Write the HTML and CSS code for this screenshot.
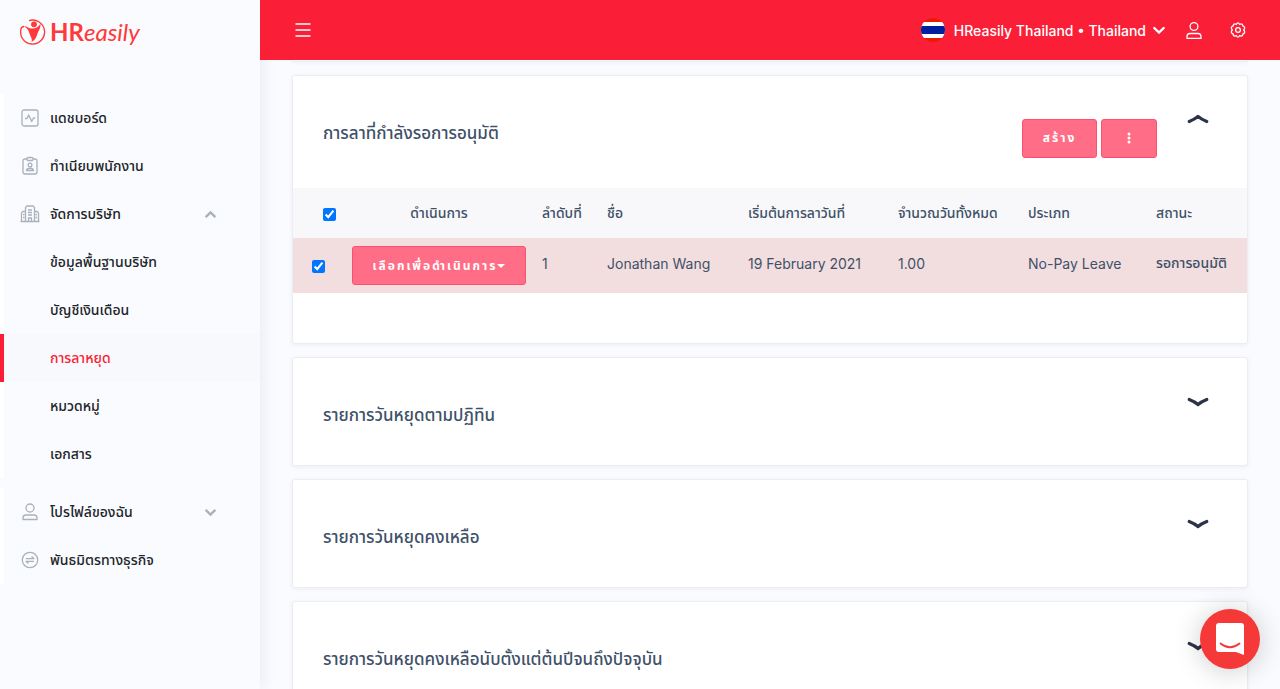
FILE: index.html
```
<!DOCTYPE html>
<html lang="th">
<head>
<meta charset="utf-8">
<meta name="viewport" content="width=device-width, initial-scale=1">
<title>HReasily</title>
<link rel="stylesheet" href="styles.css">
</head>
<body>
<div class="app">
  <aside class="sidebar">
    <a class="logo" href="#" aria-label="HReasily">
      <svg class="logo-mark" viewBox="0 0 26 26" aria-hidden="true">
        <path d="M9 1.600A12 12 0 1 1 1 10C1.200 8.500 2 7.700 4 7.500" fill="none" stroke="#ff3838" stroke-width="1.300"/>
        <circle cx="14" cy="5.300" r="2.900" fill="#ff3838"/>
        <path d="M3 7C6.500 6.500 8 9.300 12 9.600C16 9.700 18.500 8 20.500 4.600C20.700 10 18.300 12 17.300 15.200C16.500 18.500 14.800 21 11.600 23C12.400 20.500 11.300 19 10.300 16.500C9 13 8 8.500 3 7Z" fill="#ff3838"/>
      </svg>
      <span class="logo-text"><b>HR</b><i>easily</i></span>
    </a>
    <nav class="menu">
      <a class="item" href="#">
        <svg class="icon" viewBox="0 0 20 20"><rect x="2" y="2" width="16" height="16" rx="2"/><path d="M5 10.500h2L8.700 7l3 6.500L13.500 10H15"/></svg>
        <span>แดชบอร์ด</span>
      </a>
      <a class="item" href="#">
        <svg class="icon" viewBox="0 0 20 20"><path d="M7 3H5a2 2 0 0 0-2 2v11a2 2 0 0 0 2 2h10a2 2 0 0 0 2-2V5a2 2 0 0 0-2-2h-2"/><rect x="7" y="1.500" width="6" height="3" rx="1"/><circle cx="10" cy="9" r="1.900"/><path d="M6.500 14.500c.5-3 6.500-3 7 0z"/></svg>
        <span>ทำเนียบพนักงาน</span>
      </a>
      <a class="item" href="#">
        <svg class="icon" viewBox="0 0 20 20"><path d="M.5 17.500h19M5.500 17V3.500l1.500-1.500h6l1.500 1.500V17M5.500 7.500h-3L1.500 9v8M14.500 7.500h3l1 1.500v8M8 6h4M8 8.500h4M8 11h4M8.500 17v-3h3v3M3 10.500h1.500M3 13.500h1.500M15.500 10.500H17M15.500 13.500H17"/></svg>
        <span>จัดการบริษัท</span>
        <svg class="caret" viewBox="0 0 12 8"><path d="M1.500 6.500 6 2l4.500 4.500"/></svg>
      </a>
      <div class="submenu">
        <a class="item" href="#"><span>ข้อมูลพื้นฐานบริษัท</span></a>
        <a class="item" href="#"><span>บัญชีเงินเดือน</span></a>
        <a class="item active" href="#"><span>การลาหยุด</span></a>
        <a class="item" href="#"><span>หมวดหมู่</span></a>
        <a class="item" href="#"><span>เอกสาร</span></a>
      </div>
      <a class="item" href="#">
        <svg class="icon" viewBox="0 0 20 20"><circle cx="10" cy="6" r="4"/><path d="M3 17.500v-1.500c0-2 1-3 3-3h8c2 0 3 1 3 3v1.500z"/></svg>
        <span>โปรไฟล์ของฉัน</span>
        <svg class="caret" viewBox="0 0 12 8"><path d="M1.500 1.500 6 6l4.500-4.500"/></svg>
      </a>
      <a class="item" href="#">
        <svg class="icon" viewBox="0 0 20 20"><circle cx="10" cy="10" r="7.700"/><path d="M6 8.700h8L11.500 6.500M14 11.300H6l2.500 2.200"/></svg>
        <span>พันธมิตรทางธุรกิจ</span>
      </a>
    </nav>
  </aside>

  <div class="page">
    <header class="topbar">
      <button class="icon-button" type="button" aria-label="Menu">
        <svg width="16" height="16" viewBox="0 0 16 16"><path d="M.5 2h15M.5 8h15M.5 14h15" stroke="#fff" stroke-width="1.500"/></svg>
      </button>
      <div class="account">
        <button class="company" type="button">
          <svg width="24" height="24" viewBox="0 0 24 24" aria-hidden="true">
            <clipPath id="flag"><circle cx="12" cy="12" r="12"/></clipPath>
            <g clip-path="url(#flag)"><path fill="#e81c00" d="M0 0h24v24H0z"/><path fill="#fff" d="M0 4h24v16H0z"/><path fill="#00209f" d="M0 8h24v8H0z"/></g>
          </svg>
          <span>HReasily Thailand • Thailand</span>
          <svg class="company-caret" width="12" height="8" viewBox="0 0 12 8"><path d="M1.300 2 6 6.500l4.700-4.500" fill="none" stroke="#fff" stroke-width="2.400" stroke-linecap="round"/></svg>
        </button>
        <button class="icon-button" type="button" aria-label="Profile">
          <svg class="line" width="16" height="18" viewBox="0 0 16 18"><circle cx="8" cy="5.500" r="3.900"/><path d="M1 17.300v-1.500c0-2 1-3.300 3-3.300h8c2 0 3 1.300 3 3.300v1.500z"/></svg>
        </button>
        <button class="icon-button" type="button" aria-label="Settings">
          <svg class="line" width="16" height="16" viewBox="0 0 16 16"><circle cx="8" cy="8" r="2.400"/><path d="M6.400 2.300Q8-.5 9.600 2.300 12.500.9 13 4.200 16 5 13.700 8 16 11 13 11.800 12.500 15.100 9.600 13.700 8 16.500 6.400 13.700 3.500 15.100 3 11.800 0 11 2.300 8 0 5 3 4.200 3.500.9 6.400 2.300Z"/></svg>
        </button>
      </div>
    </header>

    <main class="content">
      <div class="card card-end"></div>
      <section class="card">
        <div class="card-head open">
          <h2>การลาที่กำลังรอการอนุมัติ</h2>
          <div class="actions">
            <button class="btn" type="button">สร้าง</button>
            <button class="btn more" type="button" aria-label="More"><svg width="4" height="12" viewBox="0 0 4 12"><g fill="#fff"><circle cx="2" cy="2" r="1.500"/><circle cx="2" cy="6" r="1.500"/><circle cx="2" cy="10" r="1.500"/></g></svg></button>
          </div>
          <button class="toggle" type="button" aria-label="Collapse"><svg width="22" height="10" viewBox="0 0 22 10"><path d="M2.200 7.500Q8 5.200 11 2.400 14 5.200 19.800 7.500"/></svg></button>
        </div>
        <table class="leave">
          <colgroup><col class="c-check"><col class="c-action"><col class="c-no"><col class="c-name"><col class="c-date"><col class="c-days"><col class="c-type"><col class="c-status"></colgroup>
          <thead>
            <tr>
              <th class="check"><input type="checkbox" checked aria-label="Select all"></th>
              <th class="center">ดำเนินการ</th><th>ลำดับที่</th><th>ชื่อ</th><th>เริ่มต้นการลาวันที่</th><th>จำนวณวันทั้งหมด</th><th>ประเภท</th><th>สถานะ</th>
            </tr>
          </thead>
          <tbody>
            <tr>
              <td class="control"><input type="checkbox" checked aria-label="Select Jonathan Wang"></td>
              <td class="control"><button class="btn pick" type="button">เลือกเพื่อดำเนินการ<svg width="8" height="4" viewBox="0 0 8 4"><path d="M0 0h8L4 4z" fill="#fff"/></svg></button></td>
              <td>1</td><td>Jonathan Wang</td><td>19 February 2021</td><td>1.00</td><td>No-Pay Leave</td><td class="status">รอการอนุมัติ</td>
            </tr>
          </tbody>
        </table>
      </section>
      <section class="card">
        <div class="card-head"><h2>รายการวันหยุดตามปฏิทิน</h2><button class="toggle" type="button" aria-label="Expand"><svg width="22" height="10" viewBox="0 0 22 10"><path d="M2.200 2.500Q8 4.800 11 7.600 14 4.800 19.800 2.500"/></svg></button></div>
      </section>
      <section class="card">
        <div class="card-head"><h2>รายการวันหยุดคงเหลือ</h2><button class="toggle" type="button" aria-label="Expand"><svg width="22" height="10" viewBox="0 0 22 10"><path d="M2.200 2.500Q8 4.800 11 7.600 14 4.800 19.800 2.500"/></svg></button></div>
      </section>
      <section class="card">
        <div class="card-head"><h2>รายการวันหยุดคงเหลือนับตั้งแต่ต้นปีจนถึงปัจจุบัน</h2><button class="toggle" type="button" aria-label="Expand"><svg width="22" height="10" viewBox="0 0 22 10"><path d="M2.200 2.500Q8 4.800 11 7.600 14 4.800 19.800 2.500"/></svg></button></div>
      </section>
    </main>
  </div>
</div>
<button class="chat" type="button" aria-label="Chat">
  <svg width="28" height="32" viewBox="0 0 28 32"><path d="M3 0h22a3 3 0 0 1 3 3v29l-8-3H3a3 3 0 0 1-3-3V3a3 3 0 0 1 3-3z" fill="#fff"/><path d="M4.500 20.500q9.500 7.500 19 0" fill="none" stroke="#f53838" stroke-width="1.800" stroke-linecap="round"/></svg>
</button>
</body>
</html>
```
FILE: styles.css
```
* { box-sizing: border-box; }

body {
  margin: 0;
  height: 100vh;
  overflow: hidden;
  background: #fafbff;
  color: #212529;
  font-family: Inter, "Noto Sans Thai", "Noto Sans", sans-serif;
  font-size: 14px;
}

button {
  border: 0;
  padding: 0;
  background: none;
  color: inherit;
  font: inherit;
  cursor: pointer;
}

svg { display: block; flex: none; }

.app { display: flex; height: 100%; }

.sidebar {
  position: relative;
  z-index: 1;
  flex: 0 0 260px;
  background: #fafbff;
  box-shadow: 2px 0 14px rgba(30, 40, 70, .08);
}

.logo {
  display: flex;
  align-items: center;
  gap: 4px;
  height: 64px;
  padding-left: 20px;
  color: #ff3838;
  text-decoration: none;
}
.logo-mark { width: 26px; height: 26px; }
.logo-text { font-family: Lato, sans-serif; font-size: 24px; line-height: 30px; white-space: nowrap; }
.logo-text i { font-weight: 400; }

.menu { padding-top: 30px; }

.item {
  display: flex;
  align-items: center;
  gap: 10px;
  height: 48px;
  padding: 0 43px 0 16px;
  border-left: 4px solid #fff;
  color: #212529;
  font-weight: 500;
  text-decoration: none;
  white-space: nowrap;
}
.submenu { padding-bottom: 10px; }
.submenu .item { padding-left: 46px; }
.item.active { border-left-color: #fa1e37; background: #f8f9fc; color: #fa1e37; }

.icon, .caret { fill: none; stroke: #a9b1bb; }
.icon { width: 20px; height: 20px; stroke-width: 1.3; stroke-linejoin: round; }
.caret { width: 13px; height: 9px; margin-left: auto; stroke-width: 2.2; }

.page { display: flex; flex: 1; flex-direction: column; min-width: 0; }

.topbar {
  display: flex;
  flex: 0 0 60px;
  align-items: center;
  justify-content: space-between;
  position: relative;
  z-index: 2;
  padding: 0 34px 0 35px;
  background: #fa1e37;
  color: #fff;
}
.account { display: flex; align-items: center; gap: 28px; }
.company { display: flex; align-items: center; gap: 9px; margin-right: -7px; font-weight: 500; white-space: nowrap; }
.company-caret { margin-left: -2px; }
.line { fill: none; stroke: #fff; stroke-width: 1.3; }

.content {
  display: flex;
  flex: 1;
  flex-direction: column;
  gap: 13px;
  min-height: 0;
  overflow: hidden;
  padding: 0 32px;
}

.card {
  flex: none;
  border: 1px solid #ebedf2;
  border-radius: 3px;
  background: #fff;
  box-shadow: 0 1px 4px rgba(40, 50, 80, .07);
}
.card-end { height: 2px; border-top: 0; border-radius: 0 0 3px 3px; }

.card-head {
  display: flex;
  align-items: center;
  height: 107px;
  padding: 0 38px 0 30px;
}
.card-head.open { height: 112px; }
h2 {
  flex: 1;
  margin: 0;
  padding-top: 6px;
  color: #3f5169;
  font-size: 17px;
  font-weight: 500;
  line-height: 24px;
  white-space: nowrap;
}
.open h2 { padding-top: 2px; }
.actions { display: flex; gap: 4px; padding-top: 12px; margin-right: 30px; }
.toggle { padding-bottom: 20px; }
.open .toggle { padding-bottom: 26px; }
.toggle path { fill: none; stroke: #2c334a; stroke-width: 3.2; stroke-linecap: round; stroke-linejoin: round; }

.btn {
  display: flex;
  align-items: center;
  justify-content: center;
  height: 39px;
  min-width: 75px;
  border: 1px solid #ff4f6e;
  border-radius: 3px;
  background: #ff6d86;
  color: #fff;
  font-size: 12px;
  font-weight: 700;
  letter-spacing: 2px;
  white-space: nowrap;
}
.btn.more { min-width: 56px; }
.btn.pick { width: 174px; }

.leave {
  width: 100%;
  margin-bottom: 50px;
  border-collapse: collapse;
  table-layout: fixed;
  color: #3f5169;
}
.c-check { width: 51px; }
.c-action { width: 190px; }
.c-no { width: 65px; }
.c-name { width: 141px; }
.c-date { width: 150px; }
.c-days { width: 130px; }
.c-type { width: 128px; }
.c-status { width: 99px; }
.leave th, .leave td { padding: 0 8px; text-align: left; font-weight: 400; white-space: nowrap; }
.leave th { height: 50px; background: #f8f8fa; font-size: 14px; font-weight: 500; }
.leave td { height: 55px; padding-bottom: 4px; background: #f2dede; }
.leave td.control { padding-bottom: 0; }
.leave td.status { font-weight: 500; }
.leave .center { text-align: center; }
.leave th.check { padding: 2px 8px 0 30px; }
.leave td:first-child { padding-top: 2px; padding-left: 19px; }
.leave input { display: block; width: 13px; height: 13px; margin: 0; accent-color: #0075ff; }

.chat {
  display: flex;
  position: fixed;
  right: 20px;
  bottom: 20px;
  z-index: 3;
  align-items: center;
  justify-content: center;
  width: 60px;
  height: 60px;
  border-radius: 50%;
  background: #f53838;
  box-shadow: 0 2px 28px rgba(0, 0, 0, .2);
}
```
